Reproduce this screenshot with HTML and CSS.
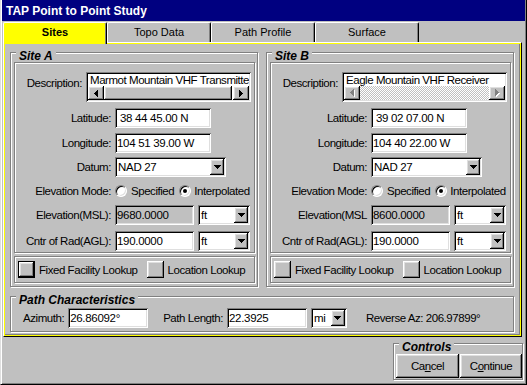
FILE: index.html
```html
<!DOCTYPE html>
<html>
<head>
<meta charset="utf-8">
<title>TAP Point to Point Study</title>
<link rel="stylesheet" href="styles.css">
</head>
<body>
<div class="win">
  <div class="titlebar">TAP Point to Point Study</div>
  <div class="tabs">
    <div class="tab sel">Sites</div>
    <div class="tab">Topo Data</div>
    <div class="tab">Path Profile</div>
    <div class="tab">Surface</div>
  </div>
  <div class="panel">
    <div class="panel-y">
      <div class="panel-c">
        <div class="sites">
          <div class="group site">
            <div class="glabel">Site A</div>
            <div class="etched fields">
              <div class="desc-row">
                <span class="lbl">Description:</span>
                <div class="desc sunken">
                  <div class="desc-text">Marmot Mountain VHF Transmitte</div>
                  <div class="hscroll">
                    <div class="sbtn raised"><svg class="ico" width="4" height="7" viewBox="0 0 4 7"><path d="M0 3h1v1H0zM1 2h1v3H1zM2 1h1v5H2zM3 0h1v7H3z"/></svg></div>
                    <div class="thumb raised"></div>
                    <div class="sbtn raised"><svg class="ico" width="4" height="7" viewBox="0 0 4 7"><path d="M0 0h1v7H0zM1 1h1v5H1zM2 2h1v3H2zM3 3h1v1H3z"/></svg></div>
                  </div>
                </div>
              </div>
              <div class="form">
                <span class="lbl">Latitude:</span>
                <div class="field sunken w96 num">&nbsp;38 44 45.00 N</div>
                <span class="lbl">Longitude:</span>
                <div class="field sunken w96 num">104 51 39.00 W</div>
                <span class="lbl">Datum:</span>
                <div class="select sunken w111"><span class="val">NAD 27</span><span class="dd raised"><svg class="ico" width="7" height="4" viewBox="0 0 7 4"><path d="M0 0h7v1H0zM1 1h5v1H1zM2 2h3v1H2zM3 3h1v1H3z"/></svg></span></div>
                <span class="lbl">Elevation Mode:</span>
                <div class="radios"><span class="radio"></span><span class="rtext">Specified</span><span class="radio on r2"></span><span class="rtext">Interpolated</span></div>
                <span class="lbl">Elevation(MSL):</span>
                <div class="pair"><div class="field sunken dis w79 num">9680.0000</div><div class="select sunken w52"><span class="val">ft</span><span class="dd raised"><svg class="ico" width="7" height="4" viewBox="0 0 7 4"><path d="M0 0h7v1H0zM1 1h5v1H1zM2 2h3v1H2zM3 3h1v1H3z"/></svg></span></div></div>
                <span class="lbl">Cntr of Rad(AGL):</span>
                <div class="pair"><div class="field sunken w79 num">190.0000</div><div class="select sunken w52"><span class="val">ft</span><span class="dd raised"><svg class="ico" width="7" height="4" viewBox="0 0 7 4"><path d="M0 0h7v1H0zM1 1h5v1H1zM2 2h3v1H2zM3 3h1v1H3z"/></svg></span></div></div>
              </div>
            </div>
            <div class="etched lookups">
              <span class="lbtn raised def"></span><span class="lk">Fixed Facility Lookup</span>
              <span class="lbtn raised"></span><span class="lk lk2">Location Lookup</span>
            </div>
          </div>

          <div class="group site">
            <div class="glabel">Site B</div>
            <div class="etched fields">
              <div class="desc-row">
                <span class="lbl">Description:</span>
                <div class="desc sunken">
                  <div class="desc-text">Eagle Mountain VHF Receiver</div>
                  <div class="hscroll">
                    <div class="sbtn raised"><svg class="ico" width="5" height="8" viewBox="0 0 5 8"><path fill="#fff" d="M1 4h1v1H1zM2 3h1v3H2zM3 2h1v5H3zM4 1h1v7H4z"/><path fill="#808080" d="M0 3h1v1H0zM1 2h1v3H1zM2 1h1v5H2zM3 0h1v7H3z"/></svg></div>
                    <div class="track"></div>
                    <div class="sbtn raised"><svg class="ico" width="5" height="8" viewBox="0 0 5 8"><path fill="#fff" d="M1 1h1v7H1zM2 2h1v5H2zM3 3h1v3H3zM4 4h1v1H4z"/><path fill="#808080" d="M0 0h1v7H0zM1 1h1v5H1zM2 2h1v3H2zM3 3h1v1H3z"/></svg></div>
                  </div>
                </div>
              </div>
              <div class="form">
                <span class="lbl">Latitude:</span>
                <div class="field sunken w96 num">&nbsp;39 02 07.00 N</div>
                <span class="lbl">Longitude:</span>
                <div class="field sunken w96 num">104 40 22.00 W</div>
                <span class="lbl">Datum:</span>
                <div class="select sunken w111"><span class="val">NAD 27</span><span class="dd raised"><svg class="ico" width="7" height="4" viewBox="0 0 7 4"><path d="M0 0h7v1H0zM1 1h5v1H1zM2 2h3v1H2zM3 3h1v1H3z"/></svg></span></div>
                <span class="lbl">Elevation Mode:</span>
                <div class="radios"><span class="radio"></span><span class="rtext">Specified</span><span class="radio on r2"></span><span class="rtext">Interpolated</span></div>
                <span class="lbl">Elevation(MSL</span>
                <div class="pair"><div class="field sunken dis w79 num">8600.0000</div><div class="select sunken w52"><span class="val">ft</span><span class="dd raised"><svg class="ico" width="7" height="4" viewBox="0 0 7 4"><path d="M0 0h7v1H0zM1 1h5v1H1zM2 2h3v1H2zM3 3h1v1H3z"/></svg></span></div></div>
                <span class="lbl">Cntr of Rad(AGL):</span>
                <div class="pair"><div class="field sunken w79 num">190.0000</div><div class="select sunken w52"><span class="val">ft</span><span class="dd raised"><svg class="ico" width="7" height="4" viewBox="0 0 7 4"><path d="M0 0h7v1H0zM1 1h5v1H1zM2 2h3v1H2zM3 3h1v1H3z"/></svg></span></div></div>
              </div>
            </div>
            <div class="etched lookups">
              <span class="lbtn raised"></span><span class="lk">Fixed Facility Lookup</span>
              <span class="lbtn raised"></span><span class="lk lk2">Location Lookup</span>
            </div>
          </div>
        </div>

        <div class="group path">
          <div class="glabel">Path Characteristics</div>
          <span class="plbl">Azimuth:</span>
          <div class="field sunken w80 num">26.86092°</div>
          <span class="plbl pl2">Path Length:</span>
          <div class="field sunken w80 num">22.3925</div>
          <div class="select sunken w36"><span class="val">mi</span><span class="dd raised"><svg class="ico" width="7" height="4" viewBox="0 0 7 4"><path d="M0 0h7v1H0zM1 1h5v1H1zM2 2h3v1H2zM3 3h1v1H3z"/></svg></span></div>
          <span class="rev">Reverse Az: 206.97899°</span>
        </div>
      </div>
    </div>
  </div>
  <div class="footer">
    <div class="group controls">
      <div class="glabel">Controls</div>
      <div class="btn raised w63">Ca<u>n</u>cel</div>
      <div class="btn raised w62">C<u>o</u>ntinue</div>
    </div>
  </div>
</div>
</body>
</html>
```

FILE: styles.css
```css
* { box-sizing: border-box; }
html, body { margin: 0; padding: 0; background: #c0c0c0; }
body {
  font-family: "Liberation Sans", Arial, sans-serif;
  font-size: 11.5px;
  color: #000;
  letter-spacing: -0.45px;
}

.raised {
  background: #c0c0c0;
  box-shadow: inset -1px -1px #000, inset 1px 1px #fff, inset -2px -2px #808080, inset 2px 2px #dfdfdf;
}
.sunken {
  background: #fff;
  box-shadow: inset 1px 1px #808080, inset -1px -1px #fff, inset 2px 2px #000, inset -2px -2px #dfdfdf;
}
.ico { display: block; }

.win {
  width: 527px;
  height: 385px;
  display: flex;
  flex-direction: column;
  border-left: 1px solid #dfdfdf;
  border-right: 1px solid #000;
  border-bottom: 1px solid #000;
  padding: 0 1px 1px 1px;
  box-shadow: inset 1px 0 #fff, inset -1px -1px #808080;
}

.titlebar {
  height: 21px;
  flex: none;
  background: #000080;
  color: #fff;
  font-weight: bold;
  font-size: 12px;
  line-height: 22px;
  letter-spacing: 0;
  padding-left: 4px;
  white-space: nowrap;
}

.tabs {
  display: flex;
  align-items: flex-start;
  height: 20px;
  flex: none;
  margin: 1px 0 0 1px;
  position: relative;
  z-index: 1;
}
.tab {
  width: 104px;
  height: 20px;
  border-top: 1px solid #fff;
  border-left: 1px solid #fff;
  border-right: 1px solid #000;
  border-radius: 2px 2px 0 0;
  box-shadow: inset -1px 0 #808080;
  text-align: center;
  font-size: 11px;
  line-height: 19px;
  letter-spacing: 0;
  white-space: nowrap;
}
.tab.sel {
  height: 22px;
  background: #ffff00;
  font-weight: bold;
}

.panel {
  width: 519px;
  height: 295px;
  flex: none;
  margin-left: 1px;
  border: 1px solid;
  border-color: #fff #000 #000 #fff;
}
.panel-y {
  height: 100%;
  border: 1px solid #ffff00;
}
.panel-c {
  height: 100%;
  border-right: 1px solid #808080;
  border-bottom: 1px solid #808080;
  padding: 8px 5px 0 5px;
}

.group {
  position: relative;
  border: 1px solid #808080;
  box-shadow: inset 1px 1px #fff, 1px 1px #fff;
}
.etched {
  border: 1px solid #808080;
  box-shadow: inset 1px 1px #fff, 1px 1px #fff;
}
.glabel {
  position: absolute;
  top: -2px;
  left: 5px;
  padding: 0 3px 0 3px;
  background: #c0c0c0;
  font-weight: bold;
  font-style: italic;
  font-size: 12px;
  line-height: 11px;
  letter-spacing: 0;
  white-space: nowrap;
}

.sites { display: flex; gap: 8px; }
.site {
  width: 248px;
  height: 235px;
  padding: 9px 0 0 3px;
}

.fields {
  width: 241px;
  height: 191px;
  padding: 9px 3px 0 0;
}
.desc-row {
  display: flex;
  justify-content: flex-end;
  align-items: flex-start;
  gap: 4px;
}
.desc-row .lbl { padding-top: 4px; line-height: 14px; white-space: nowrap; }
.desc {
  width: 165px;
  height: 30px;
  padding: 2px;
  display: flex;
  flex-direction: column;
}
.desc-text {
  height: 12px;
  line-height: 12px;
  padding-left: 2px;
  white-space: nowrap;
  overflow: hidden;
}
.hscroll { height: 14px; display: flex; }
.sbtn {
  width: 16px;
  height: 14px;
  flex: none;
  display: flex;
  align-items: center;
  justify-content: center;
}
.thumb { flex: 1; margin-right: 1px; }
.track {
  flex: 1;
  background: repeating-conic-gradient(#c0c0c0 0 25%, #fff 0 50%) 0 0 / 2px 2px;
}

.form {
  display: grid;
  grid-template-columns: 96px auto;
  grid-template-rows: 25px 24px 24px 24px 26px 20px;
  column-gap: 4px;
  align-items: start;
  margin-top: 6px;
}
.form .lbl {
  text-align: right;
  line-height: 20px;
  white-space: nowrap;
}

.field {
  height: 20px;
  padding: 0 2px;
  line-height: 21px;
  white-space: nowrap;
  overflow: hidden;
}
.field.dis { background: #c0c0c0; }
.num { letter-spacing: -0.3px; }
.w96 { width: 96px; }
.w79 { width: 79px; }
.w80 { width: 80px; }
.w111 { width: 111px; }
.w52 { width: 52px; }
.w36 { width: 36px; }
.w63 { width: 63px; }
.w62 { width: 62px; }

.select {
  height: 20px;
  padding: 2px;
  display: flex;
  flex: none;
}
.select .val {
  flex: 1;
  padding-left: 1px;
  line-height: 17px;
  white-space: nowrap;
  overflow: hidden;
  letter-spacing: -0.3px;
}
.select .dd {
  width: 14px;
  height: 16px;
  flex: none;
  display: flex;
  align-items: center;
  justify-content: center;
}

.pair { display: flex; gap: 4px; }

.radios {
  display: flex;
  align-items: center;
  height: 20px;
  white-space: nowrap;
}
.radio {
  width: 12px;
  height: 12px;
  flex: none;
  border-radius: 50%;
  background: #fff;
  border: 1px solid;
  border-color: #808080 #fff #fff #808080;
  box-shadow: inset 1px 1px #000, inset -1px -1px #dfdfdf;
}
.radio.on::after {
  content: "";
  display: block;
  width: 4px;
  height: 4px;
  margin: 3px;
  border-radius: 50%;
  background: #000;
}
.rtext { margin-left: 4px; }
.radio.r2 { margin-left: 5px; }
.radio.r2 + .rtext { margin-left: 3px; }

.lookups {
  width: 241px;
  height: 27px;
  margin-top: 3px;
  display: flex;
  align-items: center;
  padding-left: 3px;
  white-space: nowrap;
}
.lbtn {
  width: 17px;
  height: 17px;
  flex: none;
}
.lbtn.def { border: 1px solid #000; }
.lk { margin: 0 9px 0 4px; }
.lk.lk2 { margin: 0 0 0 4px; }

.path {
  width: 504px;
  height: 36px;
  margin-top: 9px;
  padding: 11px 0 0 12px;
  display: flex;
  align-items: flex-start;
  white-space: nowrap;
}
.plbl { line-height: 20px; margin-right: 4px; }
.plbl.pl2 { margin-left: 15px; }
.path .select { margin-left: 4px; }
.rev { line-height: 20px; margin-left: 19px; }

.footer {
  display: flex;
  justify-content: flex-end;
  margin-top: 6px;
  padding-right: 2px;
  flex: none;
}
.controls {
  width: 130px;
  height: 37px;
  padding: 10px 0 0 2px;
  display: flex;
  gap: 1px;
}
.btn {
  height: 24px;
  line-height: 24px;
  text-align: center;
  white-space: nowrap;
}
```
